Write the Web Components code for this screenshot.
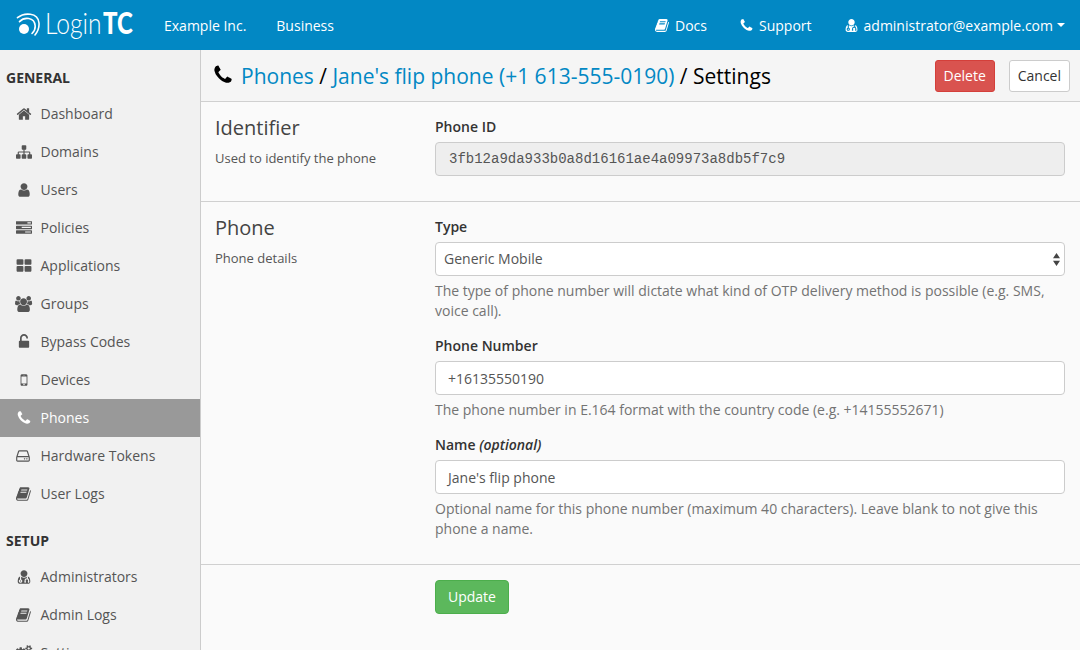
<!DOCTYPE html>
<html><head><meta charset="utf-8"><style>
html,body{margin:0;height:650px;overflow:hidden;background:#fff;font-family:"Open Sans",sans-serif;font-size:14px;color:#333}
</style></head><body>
<app-shell></app-shell>
<script>
const P={
phone:['0 0 1792 1792','M1600 1240q0 27-10 70.5t-21 68.5q-21 50-122 106-94 51-186 51-27 0-53-3.5t-57.5-12.5-47-14.5-55.5-20.5-49-18q-98-35-175-83-127-79-264-216t-216-264q-48-77-83-175-3-9-18-49t-20.5-55.5-14.5-47-12.5-57.5-3.5-53q0-92 51-186 56-101 106-122 25-11 68.5-21t70.5-10q14 0 21 3 18 6 53 76 11 19 30 54t35 63.5 31 53.5q3 4 17.5 25t21.5 35.5 7 28.5q0 20-28.5 50t-62 55-62 53-28.5 46q0 9 5 22.5t8.5 20.5 14 24 11.5 19q76 137 174 235t235 174q2 1 19 11.5t24 14 20.5 8.5 22.5 5q18 0 46-28.5t53-62 55-62 50-28.5q14 0 28.5 7t35.5 21.5 25 17.5q25 15 53.5 31t63.5 35 54 30q70 35 76 53 3 7 3 21z'],
user:['0 0 1792 1792','M1536 1399q0 109-62.5 187t-150.5 78h-854q-88 0-150.5-78t-62.5-187q0-85 8.5-160.5t31.5-152 58.5-131 94-89 134.5-34.5q131 128 313 128t313-128q76 0 134.5 34.5t94 89 58.5 131 31.5 152 8.5 160.5zm-256-887q0 159-112.5 271.5t-271.5 112.5-271.5-112.5-112.5-271.5 112.5-271.5 271.5-112.5 271.5 112.5 112.5 271.5z'],
home:['0 0 1792 1792','M1472 992v480q0 26-19 45t-45 19h-384v-384h-256v384h-384q-26 0-45-19t-19-45v-480q0-1 .5-3t.5-3l575-474 575 474q1 2 1 6zm223-69l-62 74q-8 9-21 11h-3q-13 0-21-7l-692-577-692 577q-12 8-24 7-13-2-21-11l-62-74q-8-10-7-23.5t11-21.5l719-599q32-26 76-26t76 26l244 204v-195q0-14 9-23t23-9h192q14 0 23 9t9 23v408l219 182q10 8 11 21.5t-7 23.5z'],
sitemap:['0 0 1792 1792','M1792 1248v320q0 40-28 68t-68 28h-320q-40 0-68-28t-28-68v-320q0-40 28-68t68-28h96v-192h-512v192h96q40 0 68 28t28 68v320q0 40-28 68t-68 28h-320q-40 0-68-28t-28-68v-320q0-40 28-68t68-28h96v-192h-512v192h96q40 0 68 28t28 68v320q0 40-28 68t-68 28h-320q-40 0-68-28t-28-68v-320q0-40 28-68t68-28h96v-192q0-52 38-90t90-38h512v-192h-96q-40 0-68-28t-28-68v-320q0-40 28-68t68-28h320q40 0 68 28t28 68v320q0 40-28 68t-68 28h-96v192h512q52 0 90 38t38 90v192h96q40 0 68 28t28 68z'],
tasks:['0 0 1792 1792','M1024 1408h640v-128h-640v128zm-384-512h1024v-128h-1024v128zm640-512h384v-128h-384v128zm512 832v256q0 26-19 45t-45 19h-1664q-26 0-45-19t-19-45v-256q0-26 19-45t45-19h1664q26 0 45 19t19 45zm0-512v256q0 26-19 45t-45 19h-1664q-26 0-45-19t-19-45v-256q0-26 19-45t45-19h1664q26 0 45 19t19 45zm0-512v256q0 26-19 45t-45 19h-1664q-26 0-45-19t-19-45v-256q0-26 19-45t45-19h1664q26 0 45 19t19 45z'],
grid:['0 0 1792 1792','M832 1024v384q0 52-38 90t-90 38h-512q-52 0-90-38t-38-90v-384q0-52 38-90t90-38h512q52 0 90 38t38 90zm0-768v384q0 52-38 90t-90 38h-512q-52 0-90-38t-38-90v-384q0-52 38-90t90-38h512q52 0 90 38t38 90zm896 768v384q0 52-38 90t-90 38h-512q-52 0-90-38t-38-90v-384q0-52 38-90t90-38h512q52 0 90 38t38 90zm0-768v384q0 52-38 90t-90 38h-512q-52 0-90-38t-38-90v-384q0-52 38-90t90-38h512q52 0 90 38t38 90z'],
users:['0 0 1920 1792','M593 896q-162 5-265 128h-134q-82 0-138-40.5t-56-118.5q0-353 124-353 6 0 43.5 21t97.5 42.5 119 21.5q67 0 133-23-5 37-5 66 0 139 81 256zm1071 637q0 120-73 189.5t-194 69.5h-874q-121 0-194-69.5t-73-189.5q0-53 3.5-103.5t14-109 26.5-108.5 43-97.5 62-81 85.5-53.5 111.5-20q10 0 43 21.5t73 48 107 48 135 21.5 135-21.5 107-48 73-48 43-21.5q61 0 111.5 20t85.5 53.5 62 81 43 97.5 26.5 108.5 14 109 3.5 103.5zm-1024-1277q0 106-75 181t-181 75-181-75-75-181 75-181 181-75 181 75 75 181zm704 384q0 159-112.5 271.5t-271.5 112.5-271.5-112.5-112.5-271.5 112.5-271.5 271.5-112.5 271.5 112.5 112.5 271.5zm576 225q0 78-56 118.5t-138 40.5h-134q-103-123-265-128 81-117 81-256 0-29-5-66 66 23 133 23 59 0 119-21.5t97.5-42.5 43.5-21q124 0 124 353zm-128-609q0 106-75 181t-181 75-181-75-75-181 75-181 181-75 181 75 75 181z'],
unlock:['0 0 1792 1792','M1376 768q40 0 68 28t28 68v576q0 40-28 68t-68 28h-960q-40 0-68-28t-28-68v-576q0-40 28-68t68-28h32v-320q0-185 131.5-316.5t316.5-131.5 316.5 131.5 131.5 316.5q0 26-19 45t-45 19h-64q-26 0-45-19t-19-45q0-106-75-181t-181-75-181 75-75 181v320h736z'],
mobile:['0 0 1792 1792','M976 1408q0-33-23.5-56.5t-56.5-23.5-56.5 23.5-23.5 56.5 23.5 56.5 56.5 23.5 56.5-23.5 23.5-56.5zm208-160v-704q0-13-9.5-22.5t-22.5-9.5h-512q-13 0-22.5 9.5t-9.5 22.5v704q0 13 9.5 22.5t22.5 9.5h512q13 0 22.5-9.5t9.5-22.5zm-192-848q0-16-16-16h-160q-16 0-16 16t16 16h160q16 0 16-16zm288-16v1024q0 52-38 90t-90 38h-512q-52 0-90-38t-38-90v-1024q0-52 38-90t90-38h512q52 0 90 38t38 90z'],
hdd:['0 0 1792 1792','M1040 1216q0 33-23.5 56.5t-56.5 23.5-56.5-23.5-23.5-56.5 23.5-56.5 56.5-23.5 56.5 23.5 23.5 56.5zm256 0q0 33-23.5 56.5t-56.5 23.5-56.5-23.5-23.5-56.5 23.5-56.5 56.5-23.5 56.5 23.5 23.5 56.5zm128 160v-320q0-13-9.5-22.5t-22.5-9.5h-1216q-13 0-22.5 9.5t-9.5 22.5v320q0 13 9.5 22.5t22.5 9.5h1216q13 0 22.5-9.5t9.5-22.5zm-1230-480h1180l-157-482q-4-13-16-21.5t-26-8.5h-782q-14 0-26 8.5t-16 21.5zm1358 160v320q0 66-47 113t-113 47h-1216q-66 0-113-47t-47-113v-320q0-25 16-75l197-606q17-53 63-86t101-33h782q55 0 101 33t63 86l197 606q16 50 16 75z'],
book:['0 0 1792 1792','M1639 478q40 57 18 129l-275 906q-19 64-76.5 107.5t-122.5 43.5h-923q-77 0-148.5-53.5t-99.5-131.5q-24-67-2-127 0-4 3-27t4-37q1-8-3-21.5t-3-19.5q2-11 8-21t16.5-23.5 16.5-23.5q23-38 45-91.5t30-91.5q3-10 .5-30t-.5-28q3-11 17-28t17-23q21-36 42-92t25-90q1-9-2.5-32t.5-28q4-13 22-30.5t22-22.5q19-26 42.5-84.5t27.5-96.5q1-8-3-25.5t-2-26.5q2-8 9-18t18-23 17-21q8-12 16.5-30.5t15-35 16-36 19.5-32 26.5-23.5 36-11.5 47.5 5.5l-1 3q38-9 51-9h761q74 0 114 56t18 130l-274 906q-36 119-71.5 153.5t-128.5 34.5h-869q-27 0-38 15-11 16-1 43 24 70 144 70h923q29 0 56-15.5t35-41.5l300-987q7-22 5-57 38 15 59 43zm-1064 2q-4 13 2 22.5t20 9.5h608q13 0 25.5-9.5t16.5-22.5l21-64q4-13-2-22.5t-20-9.5h-608q-13 0-25.5 9.5t-16.5 22.5zm-83 256q-4 13 2 22.5t20 9.5h608q13 0 25.5-9.5t16.5-22.5l21-64q4-13-2-22.5t-20-9.5h-608q-13 0-25.5 9.5t-16.5 22.5z'],
md:['0 0 1792 1792','M576 1344q0 26-19 45t-45 19-45-19-19-45 19-45 45-19 45 19 19 45zm1024 61q0 121-73 190t-194 69h-874q-121 0-194-69t-73-190q0-68 5.5-131t24-138 47.5-132.5 81-103 120-60.5q-22 52-22 120v203q-58 20-93 70t-35 111q0 80 56 136t136 56 136-56 56-136q0-61-35.5-111t-92.5-70v-203q0-62 25-93 132 104 295 104t295-104q25 31 25 93v64q-106 0-181 75t-75 181v89q-32 29-32 71 0 40 28 68t68 28 68-28 28-68q0-42-32-71v-89q0-52 38-90t90-38 90 38 38 90v89q-32 29-32 71 0 40 28 68t68 28 68-28 28-68q0-42-32-71v-89q0-68-34.5-127.5t-93.5-93.5q0-10 .5-42.5t0-48-2.5-41.5-7-47-13-40q68 15 120 60.5t81 103 47.5 132.5 24 138 5.5 131zm-320-893q0 159-112.5 271.5t-271.5 112.5-271.5-112.5-112.5-271.5 112.5-271.5 271.5-112.5 271.5 112.5 112.5 271.5z'],
cogs:['0 0 1920 1792','M896 896q0-106-75-181t-181-75-181 75-75 181 75 181 181 75 181-75 75-181zm768 512q0-52-38-90t-90-38-90 38-38 90q0 53 37.5 90.5t90.5 37.5 90.5-37.5 37.5-90.5zm0-1024q0-52-38-90t-90-38-90 38-38 90q0 53 37.5 90.5t90.5 37.5 90.5-37.5 37.5-90.5zm-384 421v185q0 10-7 19.5t-16 10.5l-155 24q-11 35-32 76 34 48 90 115 7 11 7 20 0 12-7 19-23 30-82.5 89.5t-78.5 59.5q-11 0-21-7l-115-90q-37 19-77 31-11 108-23 155-7 24-30 24h-186q-11 0-20-7.5t-10-17.5l-23-153q-34-10-75-31l-118 89q-7 7-20 7-11 0-21-8-144-133-144-160 0-9 7-19 10-14 41-53t47-61q-23-44-35-82l-152-24q-10-1-17-9.5t-7-19.5v-185q0-10 7-19.5t16-10.5l155-24q11-35 32-76-34-48-90-115-7-11-7-20 0-12 7-20 22-30 82-89t79-59q11 0 21 7l115 90q34-18 77-32 11-108 23-154 7-24 30-24h186q11 0 20 7.5t10 17.5l23 153q34 10 75 31l118-89q8-7 20-7 11 0 21 8 144 133 144 160 0 8-7 19-12 16-42 54t-45 60q23 48 34 82l152 23q10 2 17 10.5t7 19.5zm640 533v140q0 16-149 31-12 27-30 52 51 113 51 138 0 4-4 7-122 71-124 71-8 0-46-47t-52-68q-20 2-30 2t-30-2q-14 21-52 68t-46 47q-2 0-124-71-4-3-4-7 0-25 51-138-18-25-30-52-149-15-149-31v-140q0-16 149-31 13-29 30-52-51-113-51-138 0-4 4-7 4-2 35-20t59-34 30-16q8 0 46 46.5t52 67.5q20-2 30-2t30 2q51-71 92-112l6-2q4 0 124 70 4 3 4 7 0 25-51 138 17 23 30 52 149 15 149 31zm0-1024v140q0 16-149 31-12 27-30 52 51 113 51 138 0 4-4 7-122 71-124 71-8 0-46-47t-52-68q-20 2-30 2t-30-2q-14 21-52 68t-46 47q-2 0-124-71-4-3-4-7 0-25 51-138-18-25-30-52-149-15-149-31v-140q0-16 149-31 13-29 30-52-51-113-51-138 0-4 4-7 4-2 35-20t59-34 30-16q8 0 46 46.5t52 67.5q20-2 30-2t30 2q51-71 92-112l6-2q4 0 124 70 4 3 4 7 0 25-51 138 17 23 30 52 149 15 149 31z']
};
function def(name,css,html,init){
  customElements.define(name,class extends HTMLElement{
    connectedCallback(){
      if(this.shadowRoot)return;
      const s=this.attachShadow({mode:'open'});
      s.innerHTML='<style>'+css+'</style>'+(typeof html==='function'?html(this):html);
      if(init)init(this,s);
    }
  });
}
def('fa-i',':host{display:inline-flex;line-height:0;flex:none}svg{display:block;fill:currentColor}',
  h=>{const p=P[h.getAttribute('n')],z=h.getAttribute('s')||14;const [,,w]=p[0].split(' ');
      return `<svg width="${z*w/1792}" height="${z}" viewBox="${p[0]}"><path d="${p[1]}"/></svg>`});
def('top-link',':host{display:flex;align-items:center;gap:var(--g,5px);color:#fff;font-size:14px;font-weight:500;white-space:nowrap}','<slot name="i"></slot><slot></slot>');
def('login-logo',`:host{display:flex;align-items:center;color:#fff;width:118px;height:50px}
  svg{flex:none;margin-right:6px;margin-top:-1px}
  .t{font-family:Lato,sans-serif;font-size:30px;line-height:50px;white-space:nowrap;display:flex;margin:-7px 0 0 -1px}
  .l,.c{display:block;transform-origin:0 50%}
  .l{font-weight:300;width:58px;transform:scaleX(.82)}.c{font-weight:900;transform:scaleX(.8)}`,
  `<svg width="24" height="24" viewBox="0 0 24 24" fill="none" stroke="#fff" stroke-linecap="round">
  <circle cx="8" cy="16" r="5" fill="#fff" stroke="none"/>
  <path d="M1.5 4.7C8 -.5 22 -1 23 10C23.4 15 21.5 19 19 22" stroke-width="1.6"/>
  <path d="M3.5 8.6C8 4 18.5 3.5 19.2 13C19.4 15.5 18 18.5 16 20.5" stroke-width="1.6"/>
  </svg><span class="t"><span class="l">Login</span><span class="c">TC</span></span>`);
def('top-bar',`:host{display:flex;align-items:center;height:50px;background:#0288c4;padding:0 15px 0 16px;flex:none}
  nav{display:flex;gap:30px;margin-left:30px}.sp{flex:1}.r{display:flex;gap:32px;align-items:center}
  .car{width:0;height:0;border:4px solid transparent;border-top-color:#fff;border-bottom:0;margin-left:-1px}`,
  `<login-logo></login-logo><nav><top-link>Example Inc.</top-link><top-link>Business</top-link></nav><div class="sp"></div>
  <div class="r"><top-link><fa-i slot="i" n="book" s="15"></fa-i>Docs</top-link><top-link><fa-i slot="i" n="phone" s="15"></fa-i>Support</top-link>
  <top-link><fa-i slot="i" n="md" s="15"></fa-i>administrator@example.com<span class="car"></span></top-link></div>`);
def('side-head',':host{display:block;font-weight:700;color:#333;font-size:14px;line-height:20px;padding:0 6px}','<slot></slot>');
def('side-item',`:host{display:flex;align-items:center;box-sizing:border-box;height:38px;padding:0 0 1px 16px;color:#555;font-size:14px;white-space:nowrap}
  :host([active]){background:#999;color:#fff}
  .ic{width:16px;margin-right:8.5px;display:flex;justify-content:center;flex:none}`,
  h=>`<span class="ic"><fa-i n="${h.getAttribute('i')}" s="16"></fa-i></span><slot></slot>`);
def('side-bar',`:host{display:block;width:200px;flex:none;background:#f1f1f1;border-right:1px solid #ccc;padding-top:18px;overflow:hidden}`,
  `<side-head>GENERAL</side-head><div style="height:7px"></div>
  <side-item i="home">Dashboard</side-item><side-item i="sitemap">Domains</side-item><side-item i="user">Users</side-item>
  <side-item i="tasks">Policies</side-item><side-item i="grid">Applications</side-item><side-item i="users">Groups</side-item>
  <side-item i="unlock">Bypass Codes</side-item><side-item i="mobile">Devices</side-item><side-item i="phone" active>Phones</side-item>
  <side-item i="hdd">Hardware Tokens</side-item><side-item i="book">User Logs</side-item>
  <div style="height:18px"></div><side-head>SETUP</side-head><div style="height:7px"></div>
  <side-item i="md">Administrators</side-item><side-item i="book">Admin Logs</side-item><side-item i="cogs">Settings</side-item>`);
def('app-btn',`:host{display:inline-flex;align-items:center;justify-content:center;box-sizing:border-box;height:32px;padding:0 8px;border-radius:3px;font-size:14px;border:1px solid #ccc;background:#fff;color:#333;white-space:nowrap}
  :host([k=red]){background:#d9534f;border-color:#d43f3a;color:#fff;font-weight:500;width:60px;padding:0}
  :host([k=green]){background:#5cb85c;border-color:#4cae4c;color:#fff;font-weight:500;height:34px;padding:0 12px 2px;border-radius:4px}`,'<slot></slot>');
def('page-title',`:host{display:flex;align-items:center;height:51px;background:#f5f5f5;border-bottom:1px solid #d0d0d0;padding:0 10px 0 11px;flex:none;font-size:21px;color:#000;white-space:nowrap}
  .ph{margin-right:7px;color:#000;position:relative;top:-1px}a{color:#0288c4;text-decoration:none}
  .sp{flex:1}.b{display:flex;gap:14px;align-items:center}`,
  `<fa-i class="ph" n="phone" s="22"></fa-i><span><a>Phones</a> / <a>Jane's flip phone (+1 613-555-0190)</a> / Settings</span><div class="sp"></div>
  <div class="b"><app-btn k="red">Delete</app-btn><app-btn>Cancel</app-btn></div>`);
def('form-sec',`:host{display:grid;grid-template-columns:220px 1fr;padding:15px 15px 0 14px;border-bottom:1px solid #d0d0d0;box-sizing:border-box}
  .l{margin-top:-1px}
  h3{margin:0;font-size:20px;font-weight:400;line-height:24px;color:#444}p{margin:8px 0 0;font-size:13px;line-height:20px;color:#555}`,
  h=>`<div class="l"><h3>${h.getAttribute('t')}</h3><p>${h.getAttribute('d')}</p></div><div><slot></slot></div>`);
def('form-field',`:host{display:block;margin-bottom:15px}
  label{display:block;font-weight:600;font-size:14px;line-height:20px;margin-bottom:5px;color:#333}
  .h{margin-top:5px;color:#737373;font-size:14px;line-height:20px}
  .c{display:flex;align-items:center;box-sizing:border-box;height:34px;border:1px solid #ccc;border-radius:4px;padding:0 12px;background:#fff;color:#555;font-size:14px;position:relative}
  :host([sel]) .c{padding:0 8px 2px}
  :host([ro]) .c{background:#eee;padding:0 13px}
  :host([ro]) span.v{font-family:"Liberation Mono",monospace;font-size:14px}
  .ar{position:absolute;right:4px;top:10px;width:7px;height:13px}`,
  h=>`<label><slot name="l"></slot></label><div class="c"><span class="v">${h.getAttribute('v')}</span>${h.hasAttribute('sel')?'<svg class="ar" viewBox="0 0 7 13"><path d="M3.5 0L7 5.2H0zM3.5 13L0 7.8h7z" fill="#444"/></svg>':''}</div>${h.hasAttribute('h')?`<div class="h">${h.getAttribute('h')}</div>`:''}`);
def('app-shell',`:host{display:flex;flex-direction:column;width:1080px;height:650px;overflow:hidden}
  .b{display:flex;flex:1;min-height:0}.m{flex:1;min-width:0;display:flex;flex-direction:column;background:#fafafa}
  .f{padding:15px 0 0 234px}`,
  `<top-bar></top-bar><div class="b"><side-bar></side-bar><div class="m"><page-title></page-title>
  <form-sec t="Identifier" d="Used to identify the phone" style="height:100px">
    <form-field ro v="3fb12a9da933b0a8d16161ae4a09973a8db5f7c9"><span slot="l">Phone ID</span></form-field></form-sec>
  <form-sec t="Phone" d="Phone details" style="height:363px">
    <form-field sel v="Generic Mobile" h="The type of phone number will dictate what kind of OTP delivery method is possible (e.g. SMS, voice call)."><span slot="l">Type</span></form-field>
    <form-field v="+16135550190" h="The phone number in E.164 format with the country code (e.g. +14155552671)"><span slot="l">Phone Number</span></form-field>
    <form-field v="Jane's flip phone" h="Optional name for this phone number (maximum 40 characters). Leave blank to not give this phone a name."><span slot="l">Name <i>(optional)</i></span></form-field>
  </form-sec>
  <div class="f"><app-btn k="green">Update</app-btn></div></div></div>`);
</script></body></html>
